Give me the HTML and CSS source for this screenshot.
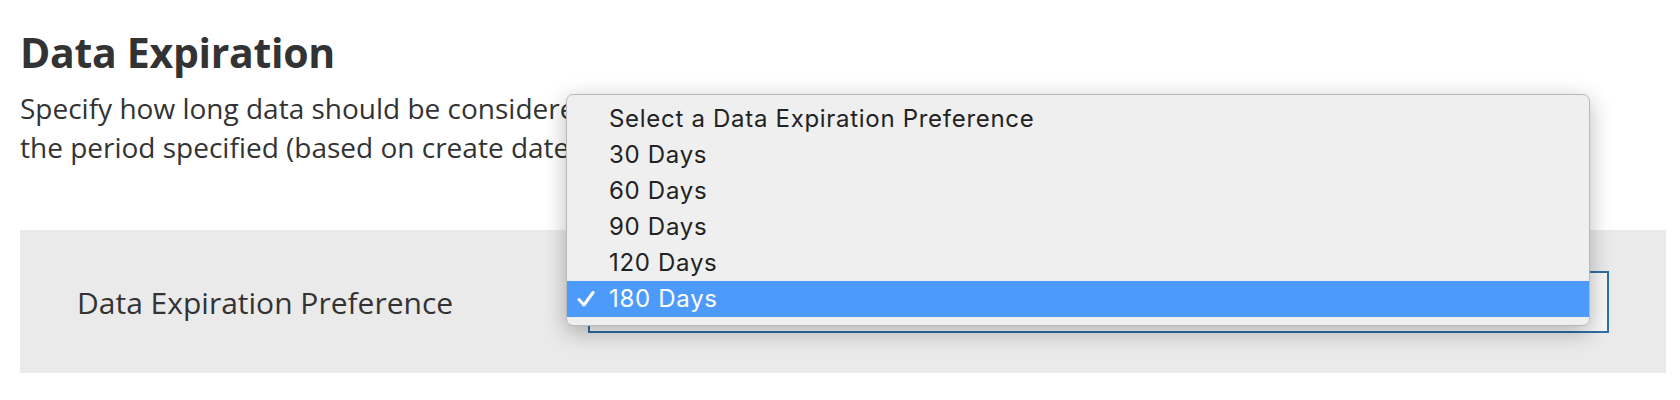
FILE: index.html
```html
<!DOCTYPE html>
<html lang="en">
<head>
<meta charset="utf-8">
<title>Data Expiration</title>
<link rel="stylesheet" href="styles.css">
</head>
<body>
<main class="page">
  <h1 class="title">Data Expiration</h1>
  <p class="desc">Specify how long data should be considered valid. Data will be automatically deleted once it exceeds<br>the period specified (based on create date).</p>
  <section class="panel">
    <label class="panel-label">Data Expiration Preference</label>
    <div class="select">
      <span class="select-value">180 Days</span>
      <ul class="menu">
        <li class="menu-item">Select a Data Expiration Preference</li>
        <li class="menu-item">30 Days</li>
        <li class="menu-item">60 Days</li>
        <li class="menu-item">90 Days</li>
        <li class="menu-item">120 Days</li>
        <li class="menu-item selected"><svg class="check" viewBox="0 0 18 16" width="18" height="16"><path d="M2 8.5 L7 14 L16 1.5" fill="none" stroke="#fff" stroke-width="3" stroke-linecap="round" stroke-linejoin="round"/></svg>180 Days</li>
      </ul>
    </div>
  </section>
</main>
</body>
</html>
```

FILE: styles.css
```css
html, body {
  margin: 0;
  padding: 0;
  background: #ffffff;
}

body {
  font-family: "Open Sans", "Noto Sans", sans-serif;
  color: #333333;
}

.page {
  padding: 28px 14px 0 20px;
}

.title {
  margin: 0;
  font-size: 41px;
  line-height: 48px;
  font-weight: 700;
  color: #333333;
  letter-spacing: -0.3px;
}

.desc {
  margin: 13px 0 0 0;
  font-size: 28px;
  line-height: 39px;
  color: #333333;
  white-space: nowrap;
}

.panel {
  margin-top: 63px;
  background: #eaeaea;
  height: 143px;
  box-sizing: border-box;
  padding: 41px 57px 40px 57px;
  display: flex;
  align-items: flex-start;
}

.panel-label {
  width: 511px;
  flex: none;
  font-size: 30px;
  line-height: 39px;
  padding-top: 12px;
  color: #333333;
}

.select {
  position: relative;
  flex: 1;
  height: 62px;
  box-sizing: border-box;
  border: 2px solid #2f6ea6;
  background: #f7f7f7;
}

.select-value {
  display: block;
  padding: 0 20px;
  line-height: 58px;
  font-size: 24px;
}

.menu {
  position: absolute;
  left: -24px;
  top: -179px;
  width: 1024px;
  box-sizing: border-box;
  margin: 0;
  padding: 6px 0 8px 0;
  list-style: none;
  background: #efefef;
  border: 1px solid #b9b9b9;
  border-radius: 7px;
  box-shadow: 0 6px 22px rgba(0, 0, 0, 0.28);
  font-family: Inter, "Liberation Sans", sans-serif;
  font-size: 24px;
  letter-spacing: 0.7px;
  color: #222222;
}

.menu-item {
  position: relative;
  height: 36px;
  line-height: 36px;
  padding-left: 42px;
}

.menu-item.selected {
  background: #4c9bfa;
  color: #ffffff;
}

.check {
  position: absolute;
  left: 10px;
  top: 10px;
}
```
